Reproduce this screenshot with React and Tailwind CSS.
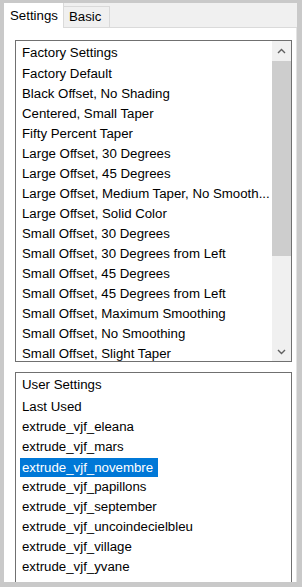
const factory = [
  'Factory Default',
  'Black Offset, No Shading',
  'Centered, Small Taper',
  'Fifty Percent Taper',
  'Large Offset, 30 Degrees',
  'Large Offset, 45 Degrees',
  'Large Offset, Medium Taper, No Smooth...',
  'Large Offset, Solid Color',
  'Small Offset, 30 Degrees',
  'Small Offset, 30 Degrees from Left',
  'Small Offset, 45 Degrees',
  'Small Offset, 45 Degrees from Left',
  'Small Offset, Maximum Smoothing',
  'Small Offset, No Smoothing',
  'Small Offset, Slight Taper',
]

const user = [
  'Last Used',
  'extrude_vjf_eleana',
  'extrude_vjf_mars',
  'extrude_vjf_novembre',
  'extrude_vjf_papillons',
  'extrude_vjf_september',
  'extrude_vjf_uncoindecielbleu',
  'extrude_vjf_village',
  'extrude_vjf_yvane',
]

function Chevron({ down }) {
  return (
    <svg width="9" height="6" viewBox="0 0 9 6" className="block">
      <path
        d={down ? 'M1 1 L4.5 4.5 L8 1' : 'M1 5 L4.5 1.5 L8 5'}
        fill="none"
        stroke="#606060"
        strokeWidth="1.4"
      />
    </svg>
  )
}

function Row({ text, selected }) {
  return (
    <div className="h-[20px] flex items-center pl-[4px]">
      <span
        className={
          selected
            ? 'h-[19px] leading-[19px] pl-[2px] pr-[5px] bg-[#0078d7] text-white whitespace-nowrap'
            : 'px-[2px] whitespace-nowrap'
        }
      >
        {text}
      </span>
    </div>
  )
}

export default function App() {
  return (
    <div
      className="w-[302px] h-[587px] bg-[#c9c9c9] pt-[3px] pl-[4px] pr-[5px] pb-[5px] text-[13.25px] text-black"
      style={{ fontFamily: '"Liberation Sans", Arial, sans-serif' }}
    >
      <div className="h-full flex flex-col bg-white overflow-hidden">
        {/* Tabs */}
        <div className="h-[25px] flex items-end bg-[#f0f0f0] border-b border-[#dadada] shrink-0">
          <div className="h-[25px] w-[60px] bg-white border-r border-[#dadada] flex items-center pl-[6px] -mb-px relative z-10">
            Settings
          </div>
          <div className="h-[21px] w-[46px] bg-[#f0f0f0] border-t border-r border-[#d9d9d9] flex items-center pl-[5px]">
            Basic
          </div>
        </div>

        {/* Page */}
        <div className="flex-1 pt-[12px] pl-[11px] border-r border-[#e3e3e3] overflow-hidden">
          {/* Factory list */}
          <div className="w-[277px] h-[322px] border border-[#707070] flex overflow-hidden">
            <div className="flex-1 overflow-hidden">
              <div className="h-[23px] flex items-center pl-[6px]">Factory Settings</div>
              {factory.map((f) => (
                <Row key={f} text={f} />
              ))}
            </div>
            <div className="w-[19px] bg-[#f0f0f0] flex flex-col shrink-0">
              <div className="h-[19px] flex items-center justify-center">
                <Chevron />
              </div>
              <div className="h-[195px] bg-[#cdcdcd] mt-px" />
              <div className="flex-1" />
              <div className="h-[19px] flex items-center justify-center">
                <Chevron down />
              </div>
            </div>
          </div>

          {/* User list */}
          <div className="w-[277px] h-[240px] mt-[10px] border border-[#707070] overflow-hidden">
            <div className="h-[24px] flex items-center pl-[6px]">User Settings</div>
            {user.map((u) => (
              <Row key={u} text={u} selected={u === 'extrude_vjf_novembre'} />
            ))}
          </div>
        </div>
      </div>
    </div>
  )
}
